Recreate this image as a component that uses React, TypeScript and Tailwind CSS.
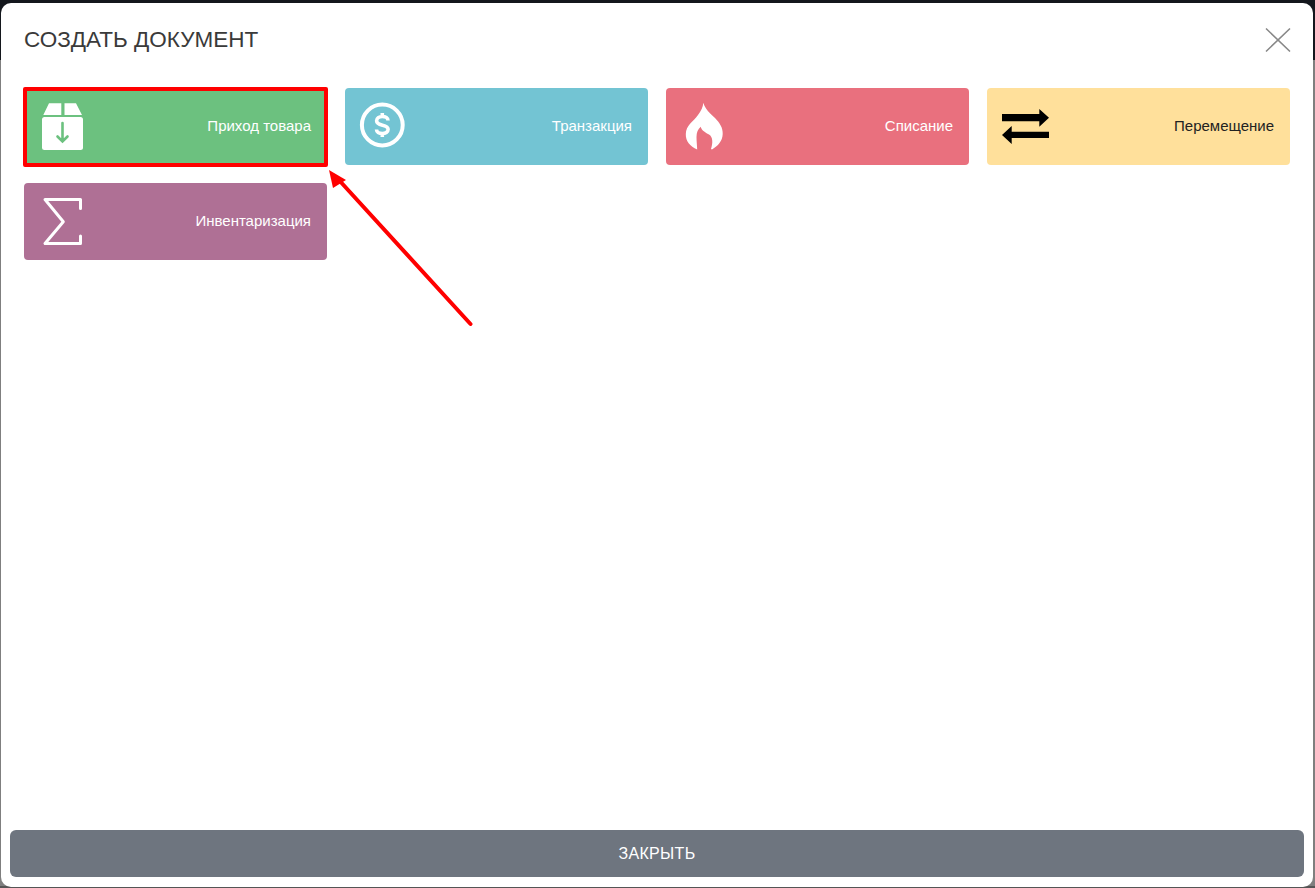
import React from "react";

function BoxIcon() {
  return (
    <svg width="50" height="51" viewBox="0 0 50 51">
      <path d="M5.3 14 L11 2.3 H23.3 V14 Z M26.5 2.3 H38 L44 14 H26.5 Z" fill="#fff" />
      <rect x="4" y="16" width="41" height="33" rx="2.5" fill="#fff" />
      <path d="M24.5 22 V40 M19.5 35.5 L24.5 40.5 L29.5 35.5" fill="none" stroke="#6CC17F" strokeWidth="2.6" strokeLinecap="round" />
    </svg>
  );
}

function DollarIcon() {
  return (
    <svg width="50" height="51" viewBox="0 0 50 51">
      <circle cx="23.3" cy="24" r="20.4" fill="none" stroke="#fff" strokeWidth="4" />
      <path
        d="M29 19.5 c0 -2.5 -2.5 -4 -5.7 -4 c-3.2 0 -5.7 1.7 -5.7 4.3 c0 6 11.5 2.8 11.5 8.5 c0 2.7 -2.6 4.2 -5.8 4.2 c-3.3 0 -5.8 -1.6 -5.8 -4 M23.3 12 V15.5 M23.3 32.5 V36"
        fill="none"
        stroke="#fff"
        strokeWidth="3.6"
      />
    </svg>
  );
}

function FlameIcon() {
  return (
    <svg width="50" height="51" viewBox="0 0 50 51">
      <path
        d="M23.3 1.7 C25 8 30 12 35 17 C40 22 43 27 42.7 33 C42.5 40 38 45 32 48.5 L31 48 C33 42 33 36 29 33.5 C25 31 22 30 20.7 25.7 C18 28 16.5 31 16.5 36 C16.5 40 17 44 17.2 48.5 C10 45.5 5.5 40 5.8 33 C6 24 13 21 18 14 C21 10 23 6 23.3 1.7 Z"
        fill="#fff"
      />
    </svg>
  );
}

function ArrowsIcon() {
  return (
    <svg width="50" height="51" viewBox="0 0 50 51">
      <path d="M1 13 H38.3 V8 L48 16.7 L38.3 25.7 V20.3 H1 Z M48 30.7 H10.7 V25 L1 34 L10.7 43 V37 H48 Z" fill="#000" />
    </svg>
  );
}

function SigmaIcon() {
  return (
    <svg width="50" height="51" viewBox="0 0 50 51">
      <path d="M42.5 12.5 V3.5 H7 L25.3 25.7 L7 47.5 H42.5 V40" fill="none" stroke="#fff" strokeWidth="3" strokeLinejoin="round" strokeLinecap="round" />
    </svg>
  );
}

const cards = [
  { label: "Приход товара", bg: "bg-[#6CC17F]", text: "text-white", icon: <BoxIcon />, marked: true },
  { label: "Транзакция", bg: "bg-[#73C4D3]", text: "text-white", icon: <DollarIcon /> },
  { label: "Списание", bg: "bg-[#E9707E]", text: "text-white", icon: <FlameIcon /> },
  { label: "Перемещение", bg: "bg-[#FFE09B]", text: "text-[#222222]", icon: <ArrowsIcon /> },
  { label: "Инвентаризация", bg: "bg-[#AF7095]", text: "text-white", icon: <SigmaIcon /> },
];

export default function App() {
  return (
    <div className="relative h-[888px] w-[1315px] overflow-hidden bg-[linear-gradient(to_bottom,#14171d_0,#14171d_60px,#7f7f7f_60px,#7f7f7f_886px,#555555_886px)] pt-[3px] pl-[1px] font-['Liberation_Sans',Arial,sans-serif]">
      <div className="flex h-[884px] w-[1312px] flex-col rounded-[10px] bg-white">
        <header className="flex h-[74px] shrink-0 items-center justify-between pr-[22px] pl-[23px]">
          <h1 className="text-[22.5px] font-normal text-[#3a3a3a]">СОЗДАТЬ ДОКУМЕНТ</h1>
          <svg width="26" height="26" viewBox="0 0 26 26">
            <path d="M1 1.5 L25 24.5 M25 1.5 L1 24.5" fill="none" stroke="#888888" strokeWidth="1.6" />
          </svg>
        </header>
        <div className="grid flex-1 grid-cols-[repeat(4,303px)] content-start gap-[18px] px-[23px] pt-[11px]">
          {cards.map((c) => (
            <div
              key={c.label}
              className={`relative flex h-[77px] items-center justify-between rounded-[4px] pr-[16px] pl-[14px] ${c.bg}`}
            >
              {c.icon}
              <span className={`text-[15px] ${c.text}`}>{c.label}</span>
              {c.marked && (
                <div className="absolute -top-[1px] -right-[1px] -bottom-[2px] -left-[1px] rounded-[2px] border-[4px] border-[#FF0000]" />
              )}
            </div>
          ))}
        </div>
        <button className="mx-[9px] mb-[10px] h-[47px] shrink-0 rounded-[6px] bg-[#6E757F] text-[16px] tracking-[0.3px] text-white">
          ЗАКРЫТЬ
        </button>
      </div>
      <svg className="pointer-events-none absolute top-0 left-0" width="1315" height="888" viewBox="0 0 1315 888">
        <path d="M470.5 324 L338 179" fill="none" stroke="#FF0000" strokeWidth="4" strokeLinecap="round" />
        <path d="M329 170 L346 180 L333 188 Z" fill="#FF0000" />
      </svg>
    </div>
  );
}
